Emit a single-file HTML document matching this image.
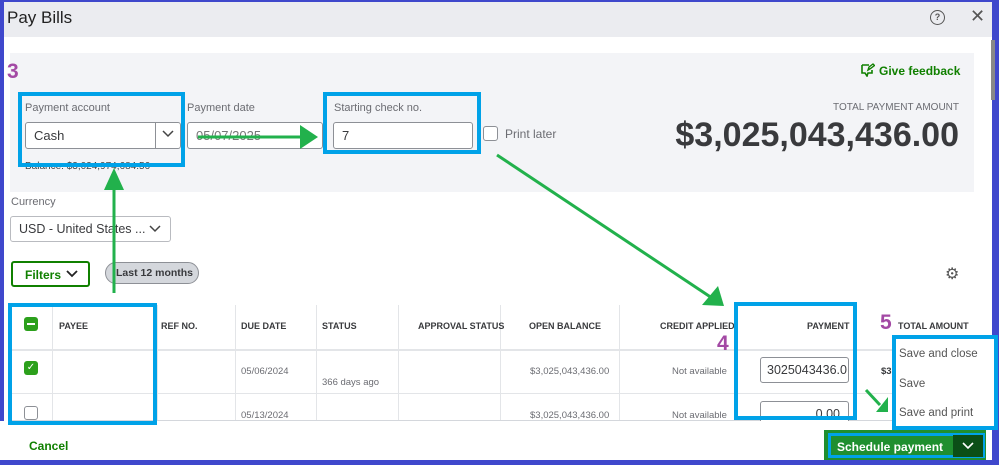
<!DOCTYPE html>
<html><head><style>
*{box-sizing:border-box;margin:0;padding:0}
body{width:999px;height:465px;overflow:hidden;background:#3f48cc;font-family:"Liberation Sans",sans-serif;position:relative;color:#393a3d}
.a{position:absolute}
.main{left:4px;top:2px;width:988px;height:458px;background:#fff}
.hdr{left:4px;top:2px;width:988px;height:35px;background:#ebecf0}
.panel{left:10px;top:53px;width:964px;height:139px;background:#f3f4f7}
.lbl{font-size:11px;color:#6b6c72}
.inp{background:#fff;border:1px solid #8d9096;border-radius:3px;font-size:13px;padding-left:8px;display:flex;align-items:center}
.th{font-size:9px;font-weight:bold;color:#393a3d;top:321px}
.vl{width:1px;background:#e3e5e8;top:305px;height:115px}
.hl{height:1px;background:#e3e5e8;left:10px;width:980px}
.td{font-size:9.5px;color:#6b6c72}
.blue{border:4px solid #00a2e8}
.num{color:#a349a4;font-weight:bold;font-size:21px}
</style></head><body>
<div class="a main"></div>
<div class="a hdr"></div>
<div class="a" style="left:7px;top:8px;font-size:17px;color:#222">Pay Bills</div>
<div class="a" style="left:930px;top:10px;width:15px;height:15px;border:1.5px solid #555;border-radius:50%;font-size:9px;text-align:center;line-height:12px;font-weight:bold;color:#555">?</div>
<div class="a" style="left:970px;top:6px;font-size:18px;color:#555">✕</div>
<div class="a" style="left:991px;top:40px;width:4px;height:60px;background:#888"></div>
<div class="a panel"></div>
<div class="a num" style="left:7px;top:60px">3</div>
<div class="a" style="left:860px;top:63px;font-size:12px;font-weight:bold;color:#108000">
<svg width="15" height="14" viewBox="0 0 15 14" style="vertical-align:-2px;margin-right:4px"><path d="M2 2h7M2 2v8h3l2 3 1-3h4V7" fill="none" stroke="#108000" stroke-width="1.6"/><path d="M8 7l1-3 4-3 1.5 1.5-4 3z" fill="none" stroke="#108000" stroke-width="1.4"/></svg>Give feedback</div>
<div class="a" style="right:40px;top:102px;font-size:10px;color:#6b6c72">TOTAL PAYMENT AMOUNT</div>
<div class="a" style="right:40px;top:116px;font-size:34px;font-weight:bold;color:#393a3d">$3,025,043,436.00</div>
<div class="a lbl" style="left:25px;top:102px">Payment account</div>
<div class="a inp" style="left:25px;top:122px;width:156px;height:27px">Cash</div>
<div class="a" style="left:155px;top:123px;width:1px;height:25px;background:#8d9096"></div>
<svg class="a" style="left:162px;top:130px" width="12" height="8"><path d="M1 1l5 5 5-5" fill="none" stroke="#444" stroke-width="1.5"/></svg>
<div class="a td" style="left:25px;top:161px;font-size:10px;color:#444">Balance: $3,024,974,684.56</div>
<div class="a lbl" style="left:187px;top:102px">Payment date</div>
<div class="a inp" style="left:187px;top:122px;width:136px;height:27px;color:#777">05/07/2025</div>
<div class="a lbl" style="left:334px;top:102px">Starting check no.</div>
<div class="a inp" style="left:333px;top:122px;width:140px;height:27px">7</div>
<div class="a" style="left:483px;top:126px;width:15px;height:15px;border:1px solid #8d9096;border-radius:3px;background:#fff"></div>
<div class="a lbl" style="left:505px;top:127px;font-size:12px">Print later</div>
<div class="a blue" style="left:18px;top:92px;width:167px;height:75px"></div>
<div class="a blue" style="left:323px;top:92px;width:158px;height:62px"></div>
<div class="a lbl" style="left:11px;top:196px">Currency</div>
<div class="a inp" style="left:10px;top:216px;width:161px;height:26px;border-color:#b9bbc0;font-size:12.5px">USD - United States ...</div>
<svg class="a" style="left:149px;top:225px" width="12" height="8"><path d="M1 1l5 5 5-5" fill="none" stroke="#444" stroke-width="1.5"/></svg>
<div class="a" style="left:11px;top:261px;width:79px;height:26px;border:2px solid #108000;border-radius:3px;font-size:12px;font-weight:bold;color:#108000;padding:5px 0 0 12px">Filters</div>
<svg class="a" style="left:66px;top:270px" width="12" height="8"><path d="M1 1l5 5 5-5" fill="none" stroke="#222" stroke-width="1.8"/></svg>
<div class="a" style="left:105px;top:262px;width:94px;height:22px;background:#d4d7dc;border:1px solid #8d9096;border-radius:11px;font-size:10.5px;font-weight:bold;color:#393a3d;padding:4px 0 0 10px">Last 12 months</div>
<div class="a" style="left:945px;top:264px;font-size:16px;color:#555">⚙</div>
<div class="a hl" style="top:349px;height:2px"></div>
<div class="a hl" style="top:393px"></div>
<div class="a hl" style="top:420px;background:#d4d7dc"></div>
<div class="a vl" style="left:52px"></div><div class="a vl" style="left:157px"></div><div class="a vl" style="left:235px"></div><div class="a vl" style="left:316px"></div><div class="a vl" style="left:398px"></div><div class="a vl" style="left:500px"></div><div class="a vl" style="left:619px"></div>
<div class="a" style="left:24px;top:317px;width:14px;height:14px;background:#2ca01c;border-radius:3px"><div style="margin:6px 3px;height:2px;background:#fff"></div></div>
<div class="a" style="left:24px;top:361px;width:14px;height:14px;background:#2ca01c;border-radius:3px;color:#fff;font-size:10px;text-align:center;line-height:14px">✓</div>
<div class="a" style="left:24px;top:406px;width:14px;height:14px;border:1px solid #8d9096;border-radius:3px"></div>
<div class="a th" style="left:59px">PAYEE</div>
<div class="a th" style="left:161px">REF NO.</div>
<div class="a th" style="left:241px">DUE DATE</div>
<div class="a th" style="left:322px">STATUS</div>
<div class="a th" style="left:418px">APPROVAL STATUS</div>
<div class="a th" style="left:529px">OPEN BALANCE</div>
<div class="a th" style="left:660px">CREDIT APPLIED</div>
<div class="a th" style="left:807px">PAYMENT</div>
<div class="a th" style="left:898px">TOTAL AMOUNT</div>
<div class="a td" style="left:241px;top:366px">05/06/2024</div>
<div class="a td" style="left:322px;top:377px">366 days ago</div>
<div class="a td" style="left:530px;top:366px">$3,025,043,436.00</div>
<div class="a td" style="left:672px;top:366px">Not available</div>
<div class="a td" style="left:241px;top:410px">05/13/2024</div>
<div class="a td" style="left:530px;top:410px">$3,025,043,436.00</div>
<div class="a td" style="left:672px;top:410px">Not available</div>
<div class="a td" style="left:881px;top:366px;font-weight:bold;color:#393a3d">$3</div>
<div class="a inp" style="left:760px;top:357px;width:89px;height:26px;font-size:12.5px;padding-left:6px;overflow:hidden;white-space:nowrap">3025043436.0</div>
<div class="a inp" style="left:760px;top:401px;width:89px;height:26px;font-size:12.5px;justify-content:flex-end;padding-right:8px">0.00</div>
<div class="a" style="left:0;top:421px;width:992px;height:39px;background:#fff"></div>
<div class="a blue" style="left:8px;top:303px;width:149px;height:122px"></div>
<div class="a blue" style="left:734px;top:302px;width:123px;height:118px"></div>
<div class="a num" style="left:717px;top:332px">4</div>
<div class="a num" style="left:880px;top:311px">5</div>
<div class="a" style="left:892px;top:335px;width:106px;height:95px;background:#fff;border:4px solid #00a2e8;font-size:11.5px;color:#555;padding:1px 0 0 3px;line-height:29.5px">Save and close<br>Save<br>Save and print</div>
<div class="a" style="left:29px;top:439px;font-size:12px;font-weight:bold;color:#108000">Cancel</div>
<div class="a" style="left:824px;top:430px;width:162px;height:30px;background:#1f8f2f"></div>
<div class="a" style="left:828px;top:433px;width:157px;height:25px;border:3px solid #00a2e8"></div>
<div class="a" style="left:837px;top:440px;font-size:12px;font-weight:bold;color:#fff">Schedule payment</div>
<div class="a" style="left:953px;top:435px;width:30px;height:22px;background:#0b4f17"></div>
<svg class="a" style="left:962px;top:442px" width="12" height="8"><path d="M1 1l5 5 5-5" fill="none" stroke="#fff" stroke-width="1.6"/></svg>
<svg class="a" style="left:0;top:0" width="999" height="465">
<g stroke="#22b14c" stroke-width="3" fill="#22b14c">
<line x1="114" y1="293" x2="114" y2="188"/><polygon points="104,190 124,190 114,168" stroke="none"/>
<line x1="198" y1="137" x2="300" y2="137"/><polygon points="300,125 300,149 318,137" stroke="none"/>
<line x1="497" y1="155" x2="712" y2="298"/><polygon points="702,305 724,306 718,286" stroke="none"/>
<line x1="866" y1="390" x2="880" y2="405"/><polygon points="876,412 888,412 888,397" stroke="none"/>
</g></svg>
</body></html>
